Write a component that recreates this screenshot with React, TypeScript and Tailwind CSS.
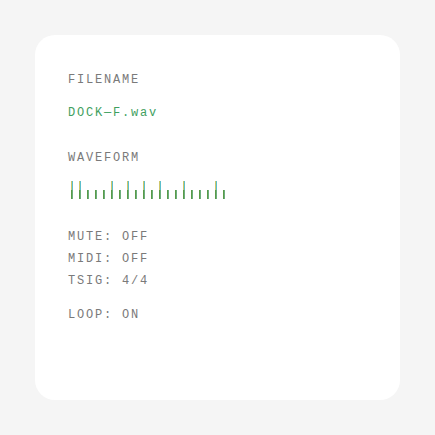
import React from "react";

// waveform bars: true = tall (peak), false = short
const bars = [
  true, true, false, false, false, true, false, true, false, true,
  false, true, false, false, true, false, false, false, true, false,
];

const settings = ["MUTE: OFF", "MIDI: OFF", "TSIG: 4/4"];

function Bar({ tall }: { tall: boolean }) {
  return (
    <div className="flex flex-col">
      {tall && (
        <div className="flex h-[9px]">
          <div className="w-px bg-[#cfc66a]" />
          <div className="w-px bg-[#5cbfcc]" />
        </div>
      )}
      <div className="flex h-[9px]">
        <div className="w-px bg-[#5a9a48]" />
        <div className="w-px bg-[#6cae7c]" />
      </div>
    </div>
  );
}

export default function App() {
  return (
    <div className="min-h-screen bg-[#f5f5f5] p-[35px]">
      <div className="h-[365px] rounded-[20px] bg-white px-[33px] pt-[37px] font-['Liberation_Mono','Courier_New',monospace] text-[12px] leading-4 tracking-[0.15em] text-[#7a7a7a]">
        <div>FILENAME</div>
        <div className="mt-[17px] text-[#3f9f5f]">DOCK—F.wav</div>

        <div className="mt-[29px]">WAVEFORM</div>
        <div className="mt-[15px] flex h-[18px] items-end gap-[6px] pl-[3px]">
          {bars.map((tall, i) => (
            <Bar key={i} tall={tall} />
          ))}
        </div>

        <div className="mt-[30px] flex flex-col gap-[6px]">
          {settings.map((s) => (
            <div key={s}>{s}</div>
          ))}
        </div>
        <div className="mt-[18px]">LOOP: ON</div>
      </div>
    </div>
  );
}
